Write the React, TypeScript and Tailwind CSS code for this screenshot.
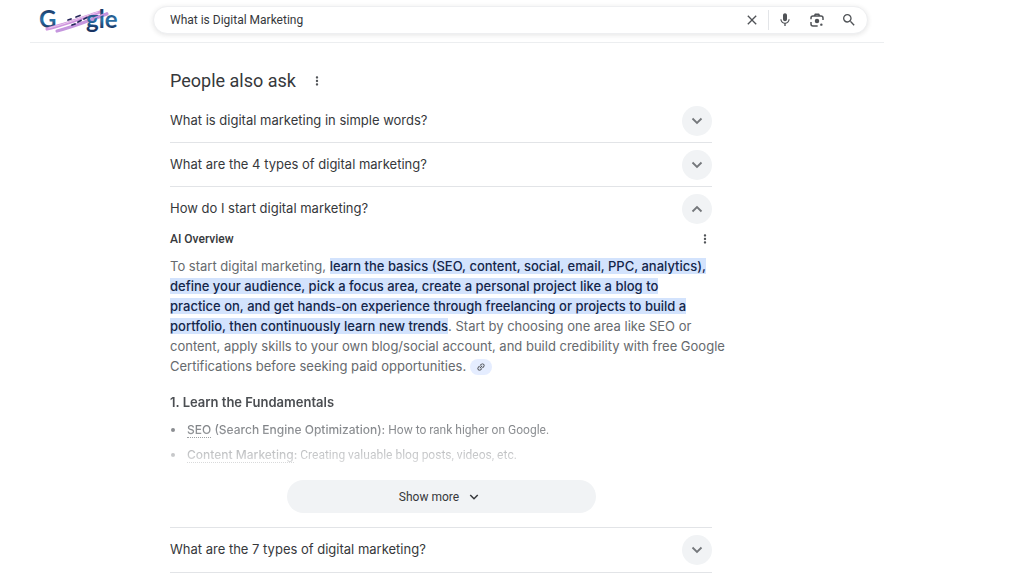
import { useState } from "react";
import { MdClose, MdLink, MdMic, MdMoreVert, MdSearch } from "react-icons/md";

function Chevron({ up = false, small = false }: { up?: boolean; small?: boolean }) {
  return (
    <svg
      viewBox="0 0 12 12"
      className={small ? "size-[10px]" : "size-3"}
      fill="none"
      stroke="currentColor"
      strokeWidth="1.8"
      aria-hidden="true"
    >
      <path d={up ? "M1.5 8.5 6 4l4.5 4.5" : "M1.5 3.5 6 8l4.5-4.5"} />
    </svg>
  );
}

function Logo() {
  return (
    <svg viewBox="0 0 80 40" className="h-10 w-20 overflow-visible" role="img" aria-label="Google">
      <defs>
        <linearGradient id="ink" x1="0" y1="0" x2="0" y2="1">
          <stop offset="0.2" stopColor="#1b3a68" />
          <stop offset="0.55" stopColor="#2a73a8" />
          <stop offset="0.85" stopColor="#173463" />
        </linearGradient>
      </defs>
      <g fill="url(#ink)" fontFamily="Lato, sans-serif" fontSize="24" fontWeight="700">
        <text x="1" y="28">
          G
        </text>
        <g fill="none" strokeLinecap="round">
          <path d="M9 29C26 25 44 18 62 12" stroke="#cf97de" strokeWidth="3.2" />
          <path d="M19 31C36 27 52 20 69 14" stroke="#c596de" strokeWidth="3.2" />
          <path d="M11 28C28 24 44 17 60 12" stroke="#ecc8ef" strokeWidth="1" />
          <path
            d="M30 20l3-1M38 17l4-1.500M34 25l3-1M40 22l3-1.500M46 19l3-1.500"
            stroke="#26275a"
            strokeWidth="1.8"
          />
        </g>
        <text x="48" y="28">
          gle
        </text>
      </g>
      <path d="M56 18L69 13" stroke="#c794dd" strokeWidth="1.4" strokeLinecap="round" />
    </svg>
  );
}

function LensIcon() {
  return (
    <svg viewBox="0 0 24 24" className="size-4" fill="none" stroke="currentColor" aria-hidden="true">
      <path
        strokeWidth="2.2"
        d="M3 11V9a3 3 0 0 1 3-3h12a3 3 0 0 1 3 3v3M3 15v3a3 3 0 0 0 3 3h7M8 6l1.500-2.500h5L16 6"
      />
      <circle cx="12" cy="13.500" r="3.400" fill="currentColor" stroke="none" />
      <circle cx="18.500" cy="19" r="1.800" fill="currentColor" stroke="none" />
    </svg>
  );
}

function SearchBar() {
  const [query, setQuery] = useState("What is Digital Marketing");

  return (
    <form
      role="search"
      onSubmit={(e) => e.preventDefault()}
      className="mt-[6px] flex h-7 w-full max-w-[716px] items-center rounded-full border border-[#eeeff1] bg-white pr-[10px] pl-4 text-[#505357] shadow-[0_1px_5px_rgba(32,33,36,0.12)]"
    >
      <input
        aria-label="Search"
        value={query}
        onChange={(e) => setQuery(e.target.value)}
        className="min-w-0 flex-1 text-xs text-[#36383b] outline-none"
      />
      <button type="button" aria-label="Clear" onClick={() => setQuery("")}>
        <MdClose className="size-4" />
      </button>
      <span className="mx-2 h-5 w-px bg-[#e3e5e8]" />
      <div className="flex items-center gap-4">
        <button type="button" aria-label="Search by voice">
          <MdMic className="size-4" />
        </button>
        <button type="button" aria-label="Search by image">
          <LensIcon />
        </button>
        <button type="submit" aria-label="Search">
          <MdSearch className="size-4" />
        </button>
      </div>
    </form>
  );
}

function Question({ text, open = false }: { text: string; open?: boolean }) {
  return (
    <button
      type="button"
      aria-expanded={open}
      className="flex h-11 w-full items-center justify-between text-left text-[13px] text-[#36383b]"
    >
      {text}
      <span className="flex size-[30px] shrink-0 items-center justify-center rounded-full bg-[#f1f3f5] text-[#74777b]">
        <Chevron up={open} />
      </span>
    </button>
  );
}

function Overview() {
  return (
    <div className="pb-[14px]">
      <div className="flex h-4 items-center justify-between">
        <h3 className="font-[Roboto,sans-serif] text-xs font-medium text-[#36383b]">AI Overview</h3>
        <button type="button" aria-label="About this result" className="text-[#505357]">
          <MdMoreVert className="size-[14px]" />
        </button>
      </div>

      <p className="mt-[9px] -mr-4 text-[13px] leading-5 text-[#666a6e]">
        To start digital marketing,{" "}
        <mark className="bg-[#d3e3fd] font-medium text-[#14264a]">
          learn the basics (SEO, content, social, email, PPC, analytics), define your audience,
          pick a focus area, create a personal project like a blog to practice&nbsp;on, and get
          hands-on experience through freelancing or projects to build a portfolio, then
          continuously learn new trends
        </mark>
        . Start by choosing one area like SEO or content, apply skills to your own blog/social
        account, and build credibility with free Google Certifications before seeking paid
        opportunities.{" "}
        <button
          type="button"
          aria-label="View related links"
          className="inline-flex h-4 w-[22px] items-center justify-center rounded-full bg-[#e5edff] align-middle text-[#36383b]"
        >
          <MdLink className="size-[10px] -rotate-45" />
        </button>
      </p>

      <div className="mt-4 mask-[linear-gradient(to_bottom,black_20px,transparent_86px)]">
        <h4 className="text-[13px] leading-5 font-semibold text-[#4b4e52]">
          1. Learn the Fundamentals
        </h4>
        <ul className="mt-2 space-y-[5px] pb-[7px] font-[Roboto,sans-serif] text-xs leading-5 text-[#5f6368]">
          <li className="flex items-center">
            <span className="mr-3 ml-[1px] size-1 rounded-full bg-current" />
            <span>
              <b className="font-[Inter,sans-serif] font-medium">
                <span className="border-b border-dotted border-current">SEO</span> (Search Engine
                Optimization):
              </b>{" "}
              How to rank higher on Google.
            </span>
          </li>
          <li className="flex items-center">
            <span className="mr-3 ml-[1px] size-1 rounded-full bg-current" />
            <span>
              <b className="font-[Inter,sans-serif] font-medium">
                <span className="border-b border-dotted border-current">Content Marketing</span>:
              </b>{" "}
              Creating valuable blog posts, videos, etc.
            </span>
          </li>
        </ul>
      </div>

      <button
        type="button"
        className="mx-auto mt-2 flex h-[33px] w-full max-w-[309px] items-center justify-center gap-[10px] rounded-full bg-[#f1f3f5] pr-1 font-[Roboto,sans-serif] text-xs text-[#36383b]"
      >
        Show more
        <Chevron small />
      </button>
    </div>
  );
}

export default function App() {
  return (
    <div className="min-h-screen bg-white font-[Roboto,sans-serif]">
      <header className="ml-[30px] flex h-[43px] max-w-[854px] items-start border-b border-[#eceef0] pr-4 pl-2">
        <a href="#" className="mr-[35px] shrink-0">
          <Logo />
        </a>
        <SearchBar />
      </header>

      <main className="ml-[170px] max-w-[542px]">
        <div className="flex items-center gap-[14px] pt-6 pb-1">
          <h2 className="text-lg leading-7 text-[#36383b]">People also ask</h2>
          <button type="button" aria-label="About this section" className="text-[#505357]">
            <MdMoreVert className="size-[14px]" />
          </button>
        </div>

        <div className="divide-y divide-[#e2e4e7] border-b border-[#e2e4e7] font-[Inter,sans-serif]">
          <Question text="What is digital marketing in simple words?" />
          <Question text="What are the 4 types of digital marketing?" />
          <div>
            <Question text="How do I start digital marketing?" open />
            <Overview />
          </div>
          <Question text="What are the 7 types of digital marketing?" />
        </div>
      </main>
    </div>
  );
}
